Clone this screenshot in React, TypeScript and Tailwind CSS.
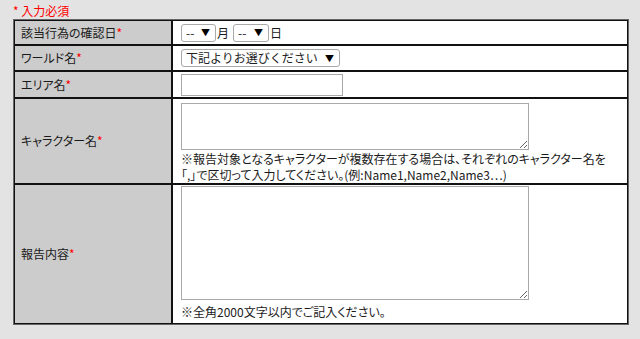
import React from "react";

const jp = "font-['Noto_Sans_CJK_JP','Noto_Sans',sans-serif] [font-feature-settings:'palt']";

function Req() {
  return <span className="text-[#ff0000]">*</span>;
}

function FakeSelect({ label, width, wide = false }: { label: string; width: string; wide?: boolean }) {
  return (
    <div
      className={`${width} h-[18px] flex items-center justify-between border border-[#a9a9a9] rounded-[3px] bg-white pl-[4px] pr-[5px] text-[12px] leading-none text-[#222]`}
    >
      <span className={wide ? "[font-feature-settings:normal]" : ""}>{label}</span>
      <span className="text-[9px] text-black">▼</span>
    </div>
  );
}

function Label({ children, h }: { children: React.ReactNode; h: string }) {
  return (
    <div className={`${h} flex items-center border border-[#111] bg-[#cccccc] pl-[6px] text-[12px] text-[#1a1a1a]`}>
      {children}
    </div>
  );
}

function Value({ children, h, className = "" }: { children: React.ReactNode; h: string; className?: string }) {
  return (
    <div className={`${h} flex border border-[#111] bg-white pl-[8px] text-[12px] text-[#1a1a1a] ${className}`}>
      {children}
    </div>
  );
}

export default function App() {
  return (
    <div className={`min-h-screen bg-[#e3e3e3] pl-[13px] pt-[2px] ${jp}`}>
      <p className="text-[12px] leading-[17px] text-[#ff0000]">* 入力必須</p>

      <div className="w-[616px] grid grid-cols-[158px_456px] border border-[#666]">
        <Label h="h-[25px]">
          該当行為の確認日<Req />
        </Label>
        <Value h="h-[25px]" className="items-center">
          <FakeSelect label="--" width="w-[35px]" />
          <span className="ml-[1px] mr-[4px]">月</span>
          <FakeSelect label="--" width="w-[36px]" />
          <span className="ml-[1px]">日</span>
        </Value>

        <Label h="h-[26px]">
          ワールド名<Req />
        </Label>
        <Value h="h-[26px]" className="items-center">
          <FakeSelect label="下記よりお選びください" width="w-[159px]" wide />
        </Value>

        <Label h="h-[27px]">
          エリア名<Req />
        </Label>
        <Value h="h-[27px]" className="items-center">
          <input
            type="text"
            readOnly
            className="block w-[162px] h-[22px] border border-[#a9a9a9] bg-white outline-none"
          />
        </Value>

        <Label h="h-[86px]">
          キャラクター名<Req />
        </Label>
        <Value h="h-[86px]" className="flex-col pt-[4px]">
          <textarea
            readOnly
            className="block w-[348px] h-[50px] border border-[#a9a9a9] bg-white outline-none"
          />
          <p className="leading-[16px] mt-[1px]">
            ※報告対象となるキャラクターが複数存在する場合は、それぞれのキャラクター名を
            <br />
            「,」で区切って入力してください。(例:Name1,Name2,Name3…)
          </p>
        </Value>

        <Label h="h-[140px]">
          報告内容<Req />
        </Label>
        <Value h="h-[140px]" className="flex-col pt-[1px]">
          <textarea
            readOnly
            className="block w-[348px] h-[114px] border border-[#a9a9a9] bg-white outline-none"
          />
          <p className="leading-[16px] mt-[4px]">※全角2000文字以内でご記入ください。</p>
        </Value>
      </div>
    </div>
  );
}
